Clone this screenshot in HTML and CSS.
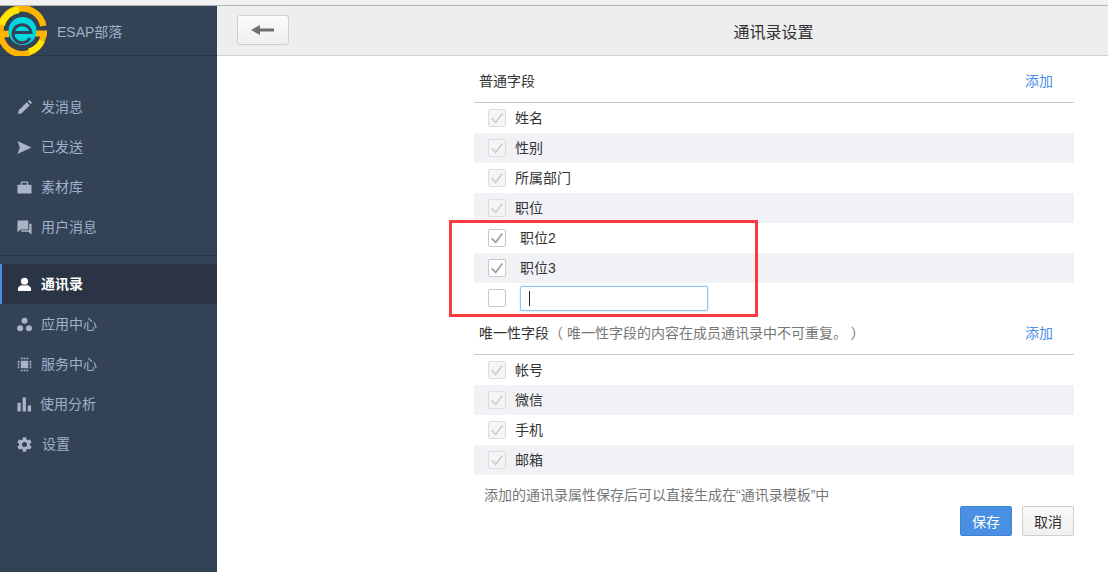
FILE: index.html
```html
<!DOCTYPE html>
<html lang="zh">
<head>
<meta charset="utf-8">
<title>通讯录设置</title>
<link rel="stylesheet" href="styles.css">
</head>
<body>
<div class="topstrip"></div>
<div class="app">
  <aside class="sidebar">
    <div class="brand">
      <svg class="logo" width="48" height="50" viewBox="0 0 48 50">
        <path d="M-1 28H9M.8 28A21.500 21.500 0 0 1 43.300 20" fill="none" stroke="#ffb400" stroke-width="6.500"/>
        <path d="M1.500 19A21.500 21.500 0 0 1 19 3.800" fill="none" stroke="#ffe600" stroke-width="6.500"/>
        <path d="M35 27.500H47M43.500 27.500A21.500 21.500 0 0 1 1 31" fill="none" stroke="#ffb400" stroke-width="6"/>
        <path d="M42 35A21.500 21.500 0 0 1 29 45.500" fill="none" stroke="#ffe600" stroke-width="6"/>
        <circle cx="22.500" cy="25" r="14" fill="#00d8e0"/>
        <path d="M14 26.500H31A9 9 0 1 0 30 32" fill="none" stroke="#33435a" stroke-width="3"/>
      </svg>
      <span class="brand-name">ESAP部落</span>
    </div>
    <nav class="nav nav-top">
      <a class="nav-item"><svg class="ico" viewBox="0 0 16 16"><path d="M1 15l.8-4L10.500 2.300l3.200 3.200L5 14.200zM11.500 1.300l1-.8a1 1 0 0 1 1.300 0l1.700 1.700a1 1 0 0 1 0 1.300l-.8 1z"/></svg><span>发消息</span></a>
      <a class="nav-item"><svg class="ico" viewBox="0 0 16 16"><path d="M0.500 1L15.500 8 0.500 15 3 8z"/></svg><span>已发送</span></a>
      <a class="nav-item"><svg class="ico" viewBox="0 0 16 16"><path fill-rule="evenodd" d="M4 5V3A1.500 1.500 0 0 1 5.500 1.500h5A1.500 1.500 0 0 1 12 3V5h3.500v9.500H.5V5zM5.500 3V5h5V3z"/></svg><span>素材库</span></a>
      <a class="nav-item"><svg class="ico" viewBox="0 0 16 16"><path d="M.5 .5H12V10H4L.5 13zM13 4h2.500V15.500L12 12.500H4.500V11H13z"/></svg><span>用户消息</span></a>
    </nav>
    <nav class="nav nav-bottom">
      <a class="nav-item active"><svg class="ico" viewBox="0 0 16 16"><circle cx="8" cy="4.500" r="3.800"/><path d="M1 15v-2.500C1 10 4 9 5.500 8.500 6.500 9.300 9.500 9.300 10.500 8.500 12 9 15 10 15 12.500V15z"/></svg><span>通讯录</span></a>
      <a class="nav-item"><svg class="ico" viewBox="0 0 16 16"><circle cx="8" cy="4" r="3.200"/><circle cx="3.300" cy="12" r="3.200"/><circle cx="12.700" cy="12" r="3.200"/></svg><span>应用中心</span></a>
      <a class="nav-item"><svg class="ico" viewBox="0 0 16 16"><rect x="4" y="4" width="8" height="8"/><path d="M4 .8h2V2.500H4zM7 .8h2V2.500H7zM10 .8h2V2.500h-2zM4 13.500h2v1.700H4zM7 13.500h2v1.700H7zM10 13.500h2v1.700h-2zM.8 4h1.700v2H.8zM.8 7h1.700v2H.8zM.8 10h1.700v2H.8zM13.500 4h1.700v2h-1.700zM13.500 7h1.700v2h-1.700zM13.500 10h1.700v2h-1.700z"/></svg><span>服务中心</span></a>
      <a class="nav-item item-tight"><svg class="ico" viewBox="0 0 16 16"><path d="M.5 6h3.500v9.500H.5zM6 .5h3.500v15H6zM11.500 9H15v6.500h-3.500z"/></svg><span>使用分析</span></a>
      <a class="nav-item item-wide"><svg class="ico" viewBox="0 0 16 16"><circle cx="8" cy="8" r="5.800"/><rect x="6.100" y=".3" width="3.800" height="15.400"/><rect x="6.100" y=".3" width="3.800" height="15.400" transform="rotate(60 8 8)"/><rect x="6.100" y=".3" width="3.800" height="15.400" transform="rotate(120 8 8)"/><circle class="hole" cx="8" cy="8" r="2.700"/></svg><span>设置</span></a>
    </nav>
  </aside>
  <main class="main">
    <header class="toolbar">
      <button class="back" type="button" aria-label="返回"><svg width="24" height="10" viewBox="0 0 24 10"><path d="M0 5l9-5v3.500h14v3H9V10z" fill="#6f6f6f"/></svg></button>
      <h1 class="title">通讯录设置</h1>
    </header>
    <div class="content">
      <div class="panel">
        <div class="section-head first"><span class="section-title">普通字段</span><a class="add">添加</a></div>
        <ul class="rows">
          <li class="row"><span class="cb off"><svg viewBox="0 0 18 18"><path d="M3 9.500l4.500 4.500L15 4"/></svg></span><span class="label">姓名</span></li>
          <li class="row alt"><span class="cb off"><svg viewBox="0 0 18 18"><path d="M3 9.500l4.500 4.500L15 4"/></svg></span><span class="label">性别</span></li>
          <li class="row"><span class="cb off"><svg viewBox="0 0 18 18"><path d="M3 9.500l4.500 4.500L15 4"/></svg></span><span class="label">所属部门</span></li>
          <li class="row alt"><span class="cb off"><svg viewBox="0 0 18 18"><path d="M3 9.500l4.500 4.500L15 4"/></svg></span><span class="label">职位</span></li>
          <li class="row custom"><span class="cb"><svg viewBox="0 0 18 18"><path d="M3 9.500l4.500 4.500L15 4"/></svg></span><span class="label">职位2</span></li>
          <li class="row alt custom"><span class="cb"><svg viewBox="0 0 18 18"><path d="M3 9.500l4.500 4.500L15 4"/></svg></span><span class="label">职位3</span></li>
          <li class="row custom"><span class="cb"></span><span class="input"><i class="caret"></i></span></li>
        </ul>
        <div class="section-head second"><span class="section-title">唯一性字段<span class="hint">（ 唯一性字段的内容在成员通讯录中不可重复。 ）</span></span><a class="add">添加</a></div>
        <ul class="rows">
          <li class="row"><span class="cb off"><svg viewBox="0 0 18 18"><path d="M3 9.500l4.500 4.500L15 4"/></svg></span><span class="label">帐号</span></li>
          <li class="row alt"><span class="cb off"><svg viewBox="0 0 18 18"><path d="M3 9.500l4.500 4.500L15 4"/></svg></span><span class="label">微信</span></li>
          <li class="row"><span class="cb off"><svg viewBox="0 0 18 18"><path d="M3 9.500l4.500 4.500L15 4"/></svg></span><span class="label">手机</span></li>
          <li class="row alt"><span class="cb off"><svg viewBox="0 0 18 18"><path d="M3 9.500l4.500 4.500L15 4"/></svg></span><span class="label">邮箱</span></li>
        </ul>
        <p class="note">添加的通讯录属性保存后可以直接生成在“通讯录模板”中</p>
        <div class="actions">
          <button class="btn primary" type="button">保存</button>
          <button class="btn" type="button">取消</button>
        </div>
      </div>
    </div>
  </main>
</div>
<div class="annotation"></div>
</body>
</html>
```
FILE: styles.css
```css
* { box-sizing: border-box; }
html, body { margin: 0; height: 100%; overflow: hidden; }
body {
  font-family: "Liberation Sans", "Noto Sans CJK SC", sans-serif;
  font-size: 14px;
  color: #333;
  background: #fff;
  display: flex;
  flex-direction: column;
}
.topstrip { height: 6px; flex: none; background: #f0f0f0; border-bottom: 1px solid #b4b4b4; }
.app { flex: 1; display: flex; min-height: 0; }

.sidebar { width: 217px; flex: none; background: #344256; color: #9fb0c8; }
.brand {
  height: 50px;
  display: flex;
  align-items: center;
  border-bottom: 1px solid #2a3646;
}
.logo { flex: none; display: block; margin-right: 9px; }
.brand-name { font-size: 14px; color: #9fb0c8; }

.nav-top { padding: 31px 0 8px; border-bottom: 1px solid #2a3646; }
.nav-bottom { padding-top: 8px; }
.nav-item {
  height: 40px;
  display: flex;
  align-items: center;
  padding-left: 17px;
  gap: 9px;
  color: #9fb0c8;
}
.nav-item span { padding-bottom: 2px; }
.ico { width: 15px; height: 15px; flex: none; fill: #a9b5c6; }
.ico .hole { fill: #344256; }
.item-tight { gap: 8px; }
.item-wide { gap: 10px; }
.active {
  background: #2a3444;
  border-left: 2px solid #4a90e2;
  padding-left: 15px;
  color: #fff;
  font-weight: bold;
}
.active .ico { fill: #fff; }

.main { flex: 1; min-width: 0; display: flex; flex-direction: column; }
.toolbar {
  height: 50px;
  flex: none;
  position: relative;
  display: flex;
  align-items: center;
  justify-content: center;
  padding-left: 222px;
  background: #eeeeee;
  border-bottom: 1px solid #cfcfcf;
}
.back {
  position: absolute;
  left: 20px;
  top: 9px;
  width: 52px;
  height: 30px;
  padding: 0;
  display: flex;
  align-items: center;
  justify-content: center;
  background: linear-gradient(#fafafa, #f0f0f0);
  border: 1px solid #cfcfcf;
  border-radius: 3px;
}
.title { margin: 0; font-size: 16px; font-weight: normal; color: #333; }

.content { flex: 1; display: flex; padding-left: 257px; }
.panel { width: 600px; }
.section-head {
  height: 47px;
  padding: 0 20px 0 5px;
  display: flex;
  align-items: center;
  justify-content: space-between;
  border-bottom: 1px solid #c8c8c8;
}
.section-head.first { padding-top: 1px; }
.section-head.second { height: 42px; padding-bottom: 3px; }
.section-title { font-size: 14px; color: #333; }
.hint { color: #777; }
.add { color: #4a90e2; font-size: 14px; margin-right: 1px; }
.rows { list-style: none; margin: 0; padding: 0; }
.row {
  height: 30px;
  display: flex;
  align-items: center;
  padding-left: 14px;
  gap: 9px;
  font-size: 14px;
  color: #333;
}
.label { padding-bottom: 2px; }
.row.alt { background: #f1f2f6; border-radius: 2px; }
.row.custom { gap: 14px; }
.cb {
  width: 18px;
  height: 18px;
  flex: none;
  display: block;
  border: 1px solid #c9c9c9;
  border-radius: 2px;
  background: #fff;
}
.cb svg { display: block; width: 16px; height: 16px; fill: none; stroke: #a0a0a0; stroke-width: 2; }
.cb.off { border-color: #dcdcdc; background: #f5f5f5; }
.cb.off svg { stroke: #d0d0d0; }
.input {
  width: 188px;
  height: 25px;
  padding: 4px 8px;
  display: block;
  border: 1px solid #8dc4f5;
  border-radius: 2px;
  box-shadow: 0 0 2px #a9d5fa;
  background: #fff;
}
.caret { display: block; width: 1px; height: 15px; background: #222; }
.note { margin: 0; padding: 12px 0 0 10px; font-size: 14px; line-height: 17px; color: #777; }
.actions { display: flex; justify-content: flex-end; gap: 10px; margin-top: 2px; }
.btn {
  width: 52px;
  height: 30px;
  padding: 0;
  font: inherit;
  font-size: 14px;
  color: #333;
  background: linear-gradient(#fafafa, #f0f0f0);
  border: 1px solid #cfcfcf;
  border-radius: 2px;
}
.btn.primary { background: #4a90e2; border-color: #3f83d3; color: #fff; }

.annotation {
  position: absolute;
  left: 449px;
  top: 220px;
  width: 309px;
  height: 97px;
  border: 3px solid #f93a3f;
  pointer-events: none;
}
```
